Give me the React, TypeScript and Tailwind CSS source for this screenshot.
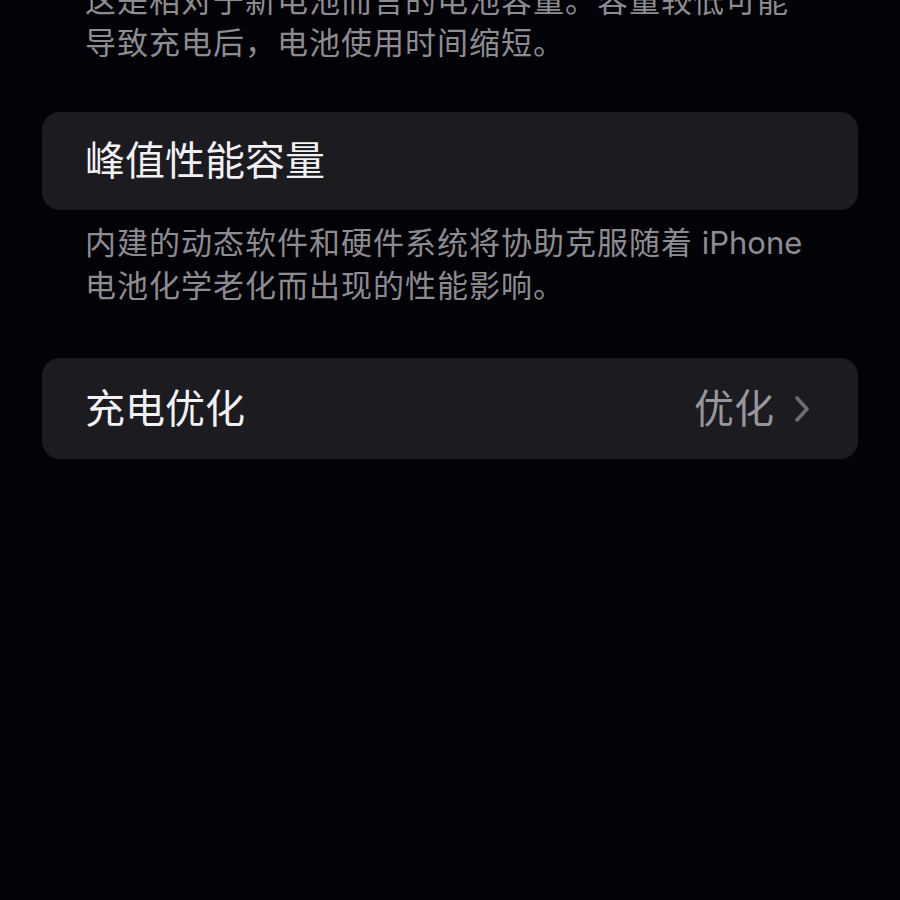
const font = { fontFamily: 'Inter, "Noto Sans CJK SC", sans-serif' };

function Chevron() {
  return (
    <svg width="16" height="28" viewBox="0 0 16 28" fill="none" stroke="#6e6d73" strokeWidth="3.6" strokeLinecap="round" strokeLinejoin="round">
      <path d="M3 3l10 11L3 25" />
    </svg>
  );
}

export default function App() {
  return (
    <div className="min-h-[900px] w-[900px] overflow-hidden bg-[#030206]" style={font}>
      <div className="flex flex-col px-[42px]">
        {/* footer of the section above, cut by the top edge */}
        <p className="-mt-[20px] px-[43px] text-[31px] leading-[42px] tracking-[1px] text-[#8d8c92]">
          这是相对于新电池而言的电池容量。容量较低可能
          <br />
          导致充电后，电池使用时间缩短。
        </p>

        {/* Peak performance capability */}
        <div className="mt-[48px] flex h-[98px] items-center rounded-[18px] bg-[#1c1b20] px-[43px]">
          <span className="text-[40px] leading-none text-[#f2f2f4]">峰值性能容量</span>
        </div>
        <p className="mt-[11px] px-[43px] text-[31px] leading-[43px] tracking-[1px] text-[#8d8c92]">
          内建的动态软件和硬件系统将协助克服随着<span className="tracking-normal"> iPhone</span>
          <br />
          电池化学老化而出现的性能影响。
        </p>

        {/* Charging optimization */}
        <div className="mt-[51px] flex h-[101px] items-center justify-between rounded-[18px] bg-[#1c1b20] pl-[43px] pr-[48px]">
          <span className="text-[40px] leading-none text-[#f2f2f4]">充电优化</span>
          <div className="flex items-center gap-[20px]">
            <span className="text-[40px] leading-none text-[#97969c]">优化</span>
            <Chevron />
          </div>
        </div>
      </div>
    </div>
  );
}
